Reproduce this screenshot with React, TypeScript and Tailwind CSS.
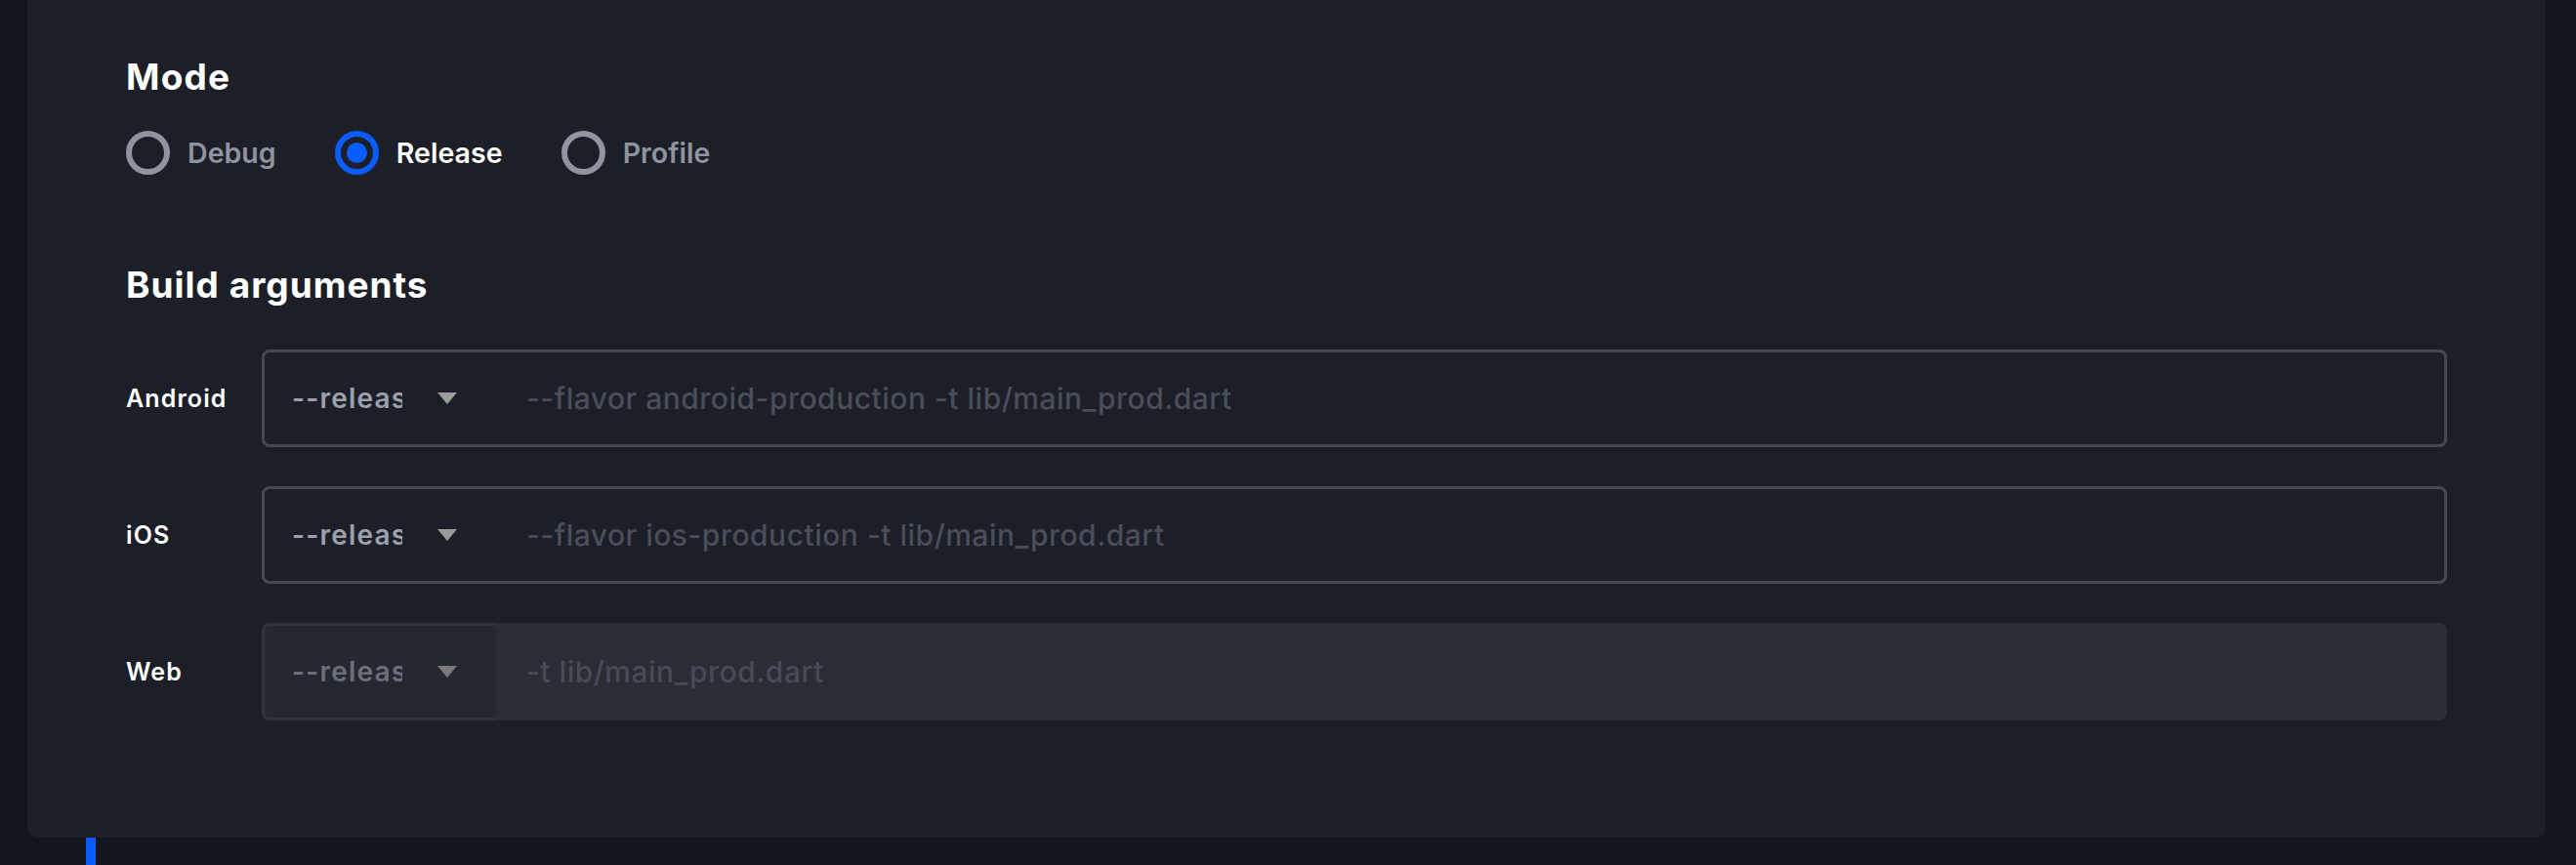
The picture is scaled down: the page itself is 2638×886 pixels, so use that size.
import React from "react";

type Row = {
  label: string;
  value: string;
  placeholder: string;
  disabled?: boolean;
};

const rows: Row[] = [
  { label: "Android", value: "--release", placeholder: "--flavor android-production -t lib/main_prod.dart" },
  { label: "iOS", value: "--release", placeholder: "--flavor ios-production -t lib/main_prod.dart" },
  { label: "Web", value: "--release", placeholder: "-t lib/main_prod.dart", disabled: true },
];

function Caret({ color }: { color: string }) {
  return (
    <svg width="20" height="12" viewBox="0 0 20 12" className="shrink-0">
      <path d="M0 0 L20 0 L10 12 Z" fill={color} />
    </svg>
  );
}

function Radio({ label, checked }: { label: string; checked?: boolean }) {
  return (
    <div className="flex items-center gap-[18px]">
      {checked ? (
        <div className="flex h-[45px] w-[45px] items-center justify-center rounded-full border-[6px] border-[#0b5cff]">
          <div className="h-[21px] w-[21px] rounded-full bg-[#0b5cff]" />
        </div>
      ) : (
        <div className="h-[45px] w-[45px] rounded-full border-[6px] border-[#8f94a0]" />
      )}
      <span
        className={
          checked
            ? "text-[28.5px] font-semibold leading-[40px] tracking-[0.05px] text-white"
            : "text-[28.5px] font-semibold leading-[40px] tracking-[0.05px] text-[#8f94a0]"
        }
      >
        {label}
      </span>
    </div>
  );
}

function ArgRow({ row }: { row: Row }) {
  const selectInner = (
    <>
      <span
        className={
          row.disabled
            ? "w-[113px] overflow-hidden whitespace-nowrap text-[28px] font-semibold leading-[36px] tracking-[1.2px] text-[#6b6f79]"
            : "w-[113px] overflow-hidden whitespace-nowrap text-[28px] font-semibold leading-[36px] tracking-[1.2px] text-[#9ca0ab]"
        }
      >
        {row.value}
      </span>
      <Caret color={row.disabled ? "#7a7a7c" : "#9b9b9b"} />
    </>
  );

  return (
    <div className="flex items-center">
      <div className="w-[139px] shrink-0 text-[25px] font-semibold leading-[36px] tracking-[1.1px] text-white">
        {row.label}
      </div>
      {row.disabled ? (
        <div className="flex h-[100px] flex-1 overflow-hidden rounded-[8px] bg-[#2a2d36]">
          <div className="flex w-[240px] shrink-0 items-center gap-[36px] rounded-l-[8px] border-[3px] border-r-0 border-[#30333c] bg-[#252831] pl-[28px]">
            {selectInner}
          </div>
          <div className="flex flex-1 items-center whitespace-nowrap pl-[31px] text-[30px] font-medium leading-[36px] tracking-[0.5px] text-[#464b57]">
            {row.placeholder}
          </div>
        </div>
      ) : (
        <div className="flex h-[100px] flex-1 rounded-[8px] border-[3px] border-[#454955]">
          <div className="flex w-[237px] shrink-0 items-center gap-[36px] pl-[28px]">{selectInner}</div>
          <div className="flex flex-1 items-center whitespace-nowrap pl-[31px] text-[30px] font-medium leading-[36px] tracking-[0.5px] text-[#494e5b]">
            {row.placeholder}
          </div>
        </div>
      )}
    </div>
  );
}

export default function App() {
  return (
    <div className="min-h-[886px] w-full bg-[#13161d] font-['Inter',sans-serif]">
      <div className="ml-[28px] w-[2579px] rounded-b-[10px] bg-[#1c1f27] px-[101px] pb-[120px] pt-[54px]">
        <h2 className="text-[37px] font-bold leading-[50px] tracking-[1.2px] text-white">Mode</h2>
        <div className="mt-[30px] flex items-center gap-[60px]">
          <Radio label="Debug" />
          <Radio label="Release" checked />
          <Radio label="Profile" />
        </div>
        <h2 className="mt-[88px] text-[37px] font-bold leading-[50px] tracking-[1px] text-white">
          Build arguments
        </h2>
        <div className="mt-[41px] flex flex-col gap-[40px]">
          {rows.map((r) => (
            <ArgRow key={r.label} row={r} />
          ))}
        </div>
      </div>
      <div className="ml-[88px] h-[28px] w-[10px] bg-[#0b5cff]" />
    </div>
  );
}
